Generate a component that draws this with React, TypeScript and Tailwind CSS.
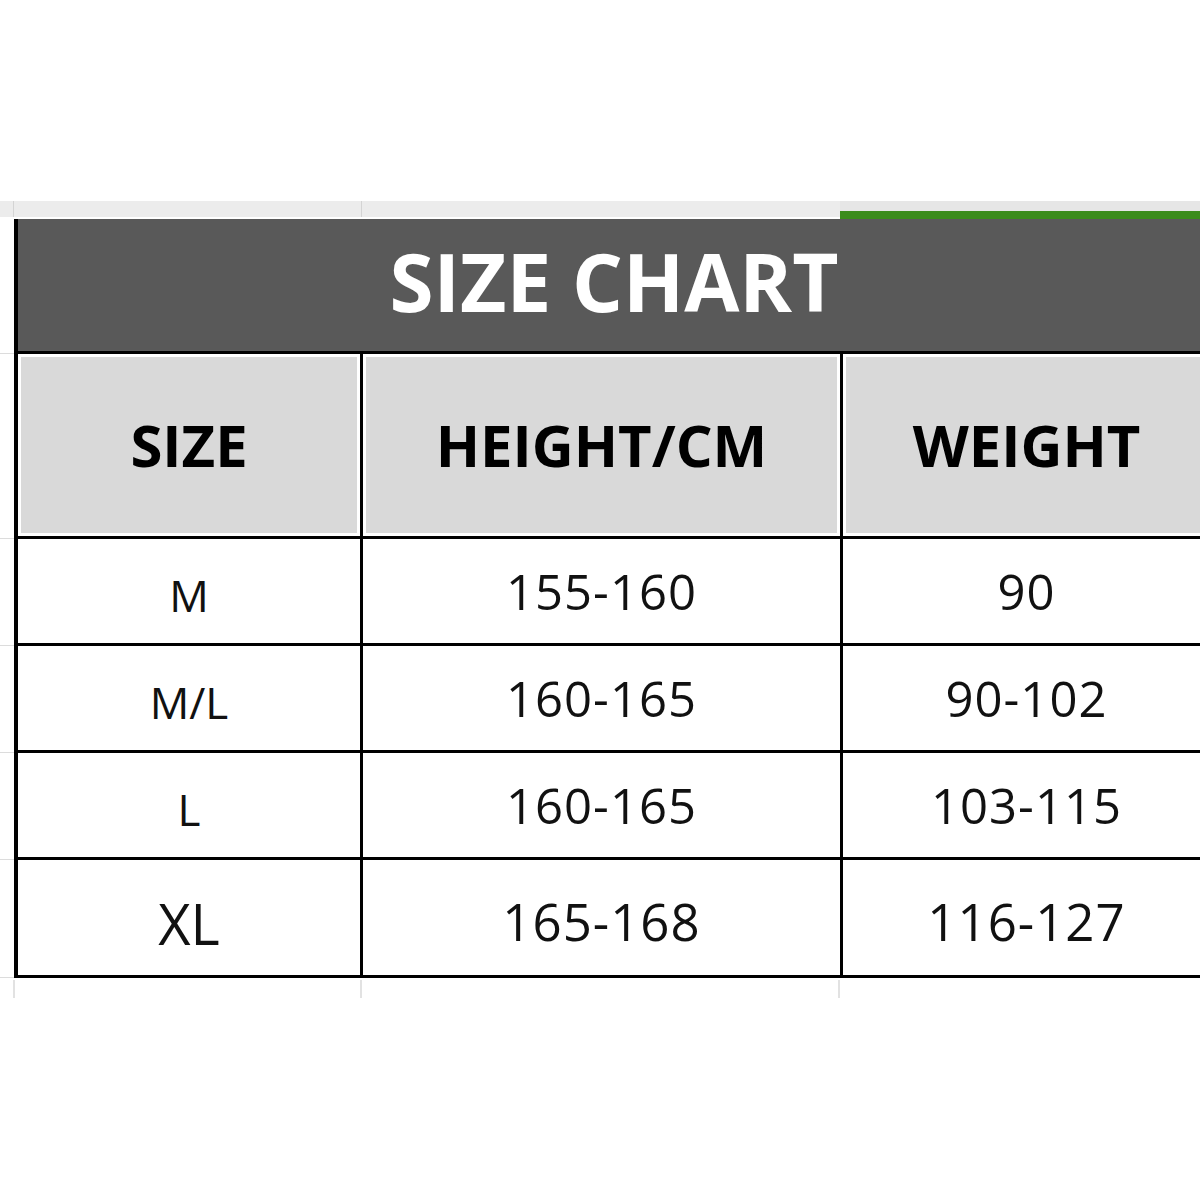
const rows = [
  { size: "M", height: "155-160", weight: "90", h: "h-[107px]", big: false },
  { size: "M/L", height: "160-165", weight: "90-102", h: "h-[107px]", big: false },
  { size: "L", height: "160-165", weight: "103-115", h: "h-[107px]", big: false },
  { size: "XL", height: "165-168", weight: "116-127", h: "h-[118px]", big: true },
];

const font = { fontFamily: '"Open Sans", "Liberation Sans", sans-serif' };

function Margin({ h }: { h: string }) {
  // the sheet's row gridlines left of the table
  return <div className={`w-[14px] shrink-0 border-b border-[#dcdcdc] ${h}`} />;
}

export default function App() {
  return (
    <div className="w-[1200px] h-[1200px] bg-white overflow-hidden" style={font}>
      <div className="h-[201px]" />

      {/* column header strip + selection bar */}
      <div className="flex h-[18px]">
        <div className="w-[14px] shrink-0 bg-[#ececec] h-[16px] border-r border-[#d4d4d4]" />
        <div className="w-[348px] shrink-0 bg-[#ececec] h-[16px] border-r border-[#d4d4d4]" />
        <div className="w-[478px] shrink-0 bg-[#ececec] h-[16px]" />
        <div className="flex-1 flex flex-col">
          <div className="h-[10px] bg-[#e6e6e6]" />
          <div className="h-[8px] bg-[#3b8c1c]" />
        </div>
      </div>

      {/* title */}
      <div className="flex">
        <Margin h="h-[135px]" />
        <div className="w-[1196px] shrink-0 h-[135px] border-l-4 border-b-[3px] border-black bg-[#595959] flex items-center justify-center">
          <span className="text-[80px] font-bold text-white leading-none pb-[8px]">SIZE CHART</span>
        </div>
      </div>

      {/* column headers */}
      <div className="flex">
        <Margin h="h-[185px]" />
        <div className="w-[1196px] shrink-0 h-[185px] border-l-4 border-b-[3px] border-black grid grid-cols-[345px_480px_1fr]">
          {["SIZE", "HEIGHT/CM", "WEIGHT"].map((t, i) => (
            <div key={t} className={`p-[3px] bg-white ${i < 2 ? "border-r-[3px] border-black" : ""}`}>
              <div className="h-full bg-[#d9d9d9] flex items-center justify-center">
                <span className="text-[58px] font-bold text-black leading-none">{t}</span>
              </div>
            </div>
          ))}
        </div>
      </div>

      {/* data rows */}
      {rows.map((r) => (
        <div key={r.size + r.weight} className="flex">
          <Margin h={r.h} />
          <div className={`w-[1196px] shrink-0 ${r.h} border-l-4 border-b-[3px] border-black grid grid-cols-[345px_480px_1fr] text-[#111]`}>
            <div className="border-r-[3px] border-black flex items-center justify-center">
              <span className={`${r.big ? "text-[56px] pt-[10px]" : "text-[44px] pt-[8px]"} leading-none`}>{r.size}</span>
            </div>
            <div className="border-r-[3px] border-black flex items-center justify-center">
              <span className={`${r.big ? "text-[51px] pt-[8px]" : "text-[49px]"} leading-none tracking-[1px]`}>{r.height}</span>
            </div>
            <div className="flex items-center justify-center">
              <span className={`${r.big ? "text-[51px] pt-[8px]" : "text-[49px]"} leading-none tracking-[1px]`}>{r.weight}</span>
            </div>
          </div>
        </div>
      ))}

      {/* gridline stubs under the table */}
      <div className="flex h-[20px] pt-[2px]">
        <div className="w-[15px] shrink-0 border-r-2 border-[#e2e2e2]" />
        <div className="w-[347px] shrink-0 border-r-2 border-[#e2e2e2]" />
        <div className="w-[478px] shrink-0 border-r-2 border-[#e2e2e2]" />
      </div>
    </div>
  );
}
